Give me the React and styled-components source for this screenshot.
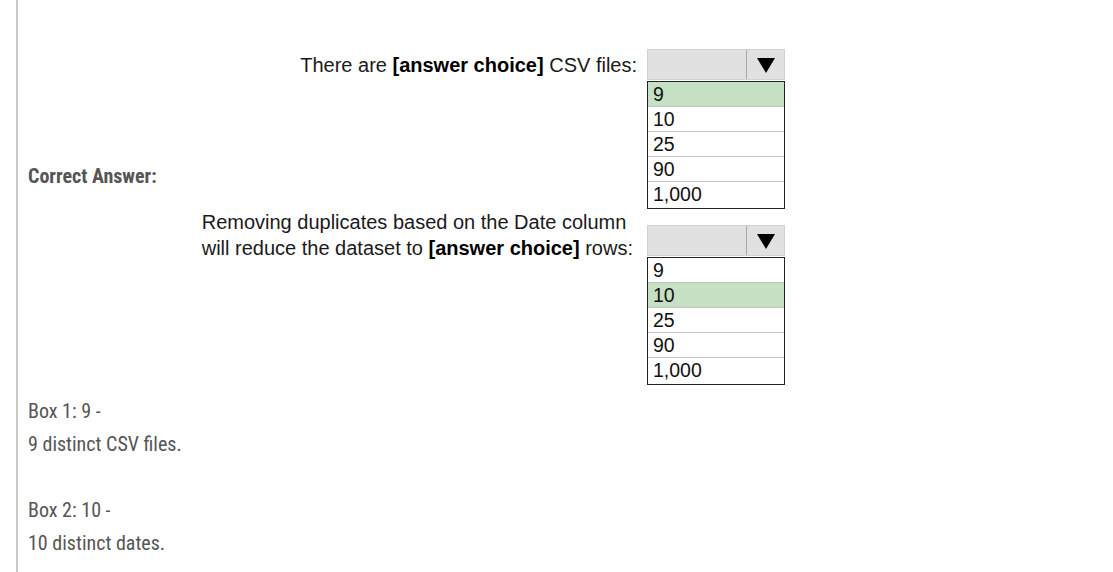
import React from "react";
import styled, { createGlobalStyle } from "styled-components";

const Global = createGlobalStyle`
  html, body { margin: 0; padding: 0; background: #fff; }
  body { font-family: "Liberation Sans", Arial, sans-serif; }
`;

const Page = styled.div`
  margin-left: 16px;
  border-left: 2px solid #c9c9c9;
  min-height: 572px;
  padding: 49px 0 0 10px;
  box-sizing: border-box;
`;

const AnswerRow = styled.div`
  display: flex;
  align-items: flex-start;
`;

const Label = styled.div`
  width: 162px;
  flex: none;
  margin-top: 111px;
  font-family: "Roboto Condensed", "Roboto", sans-serif;
  font-stretch: 85%;
  font-weight: 700;
  font-size: 20px;
  line-height: 33px;
  color: #555;
`;

const Figure = styled.div`
  display: flex;
  flex-direction: column;
`;

const Question = styled.div`
  display: grid;
  grid-template-columns: 447px 138px;
  column-gap: 10px;
  align-items: ${(p) => (p.$align === "end" ? "end" : "center")};
`;

const Prompt = styled.div`
  justify-self: end;
  grid-column: 1;
  grid-row: 1;
  font-family: "Liberation Sans", Arial, sans-serif;
  font-size: 20px;
  line-height: 26px;
  color: #1a1a1a;
  white-space: nowrap;
  margin-right: ${(p) => p.$shift || 0}px;
  margin-bottom: ${(p) => p.$drop || 0}px;
  b { font-weight: 700; color: #000; }
`;

const Select = styled.div`
  grid-column: 2;
  grid-row: 1;
  height: 31px;
  box-sizing: border-box;
  display: flex;
  background: #e1e1e1;
  border: 1px solid #d2d2d2;
`;

const SelectValue = styled.div`
  flex: 1;
  border-right: 1px solid #a8a8a8;
`;

const Arrow = styled.div`
  width: 37px;
  display: flex;
  align-items: center;
  justify-content: center;
  svg { display: block; margin-top: 1px; }
`;

const List = styled.div`
  grid-column: 2;
  grid-row: 2;
  margin-top: 1px;
  border: 1px solid #222;
  background: #fff;
`;

const Option = styled.div`
  height: ${(p) => (p.$last ? 26 : 24)}px;
  line-height: 24px;
  padding-left: 5px;
  font-family: "Liberation Sans", Arial, sans-serif;
  font-size: 19.5px;
  color: #111;
  background: ${(p) => (p.$correct ? "#c6e0c4" : "#fff")};
  border-bottom: ${(p) => (p.$last ? "none" : "1px solid #c4c4c4")};
`;

const Notes = styled.div`
  margin-top: 10px;
  font-family: "Roboto Condensed", "Roboto", sans-serif;
  font-stretch: 85%;
  font-size: 20px;
  line-height: 33px;
  color: #555;
`;

const Line = styled.div`
  min-height: 33px;
`;

const options = ["9", "10", "25", "90", "1,000"];

function Dropdown({ correct }) {
  return (
    <>
      <Select>
        <SelectValue />
        <Arrow>
          <svg width="18" height="15" viewBox="0 0 18 15">
            <polygon points="0,0 18,0 9,15" fill="#000" />
          </svg>
        </Arrow>
      </Select>
      <List>
        {options.map((o, i) => (
          <Option key={o} $correct={o === correct} $last={i === options.length - 1}>
            {o}
          </Option>
        ))}
      </List>
    </>
  );
}

export default function App() {
  return (
    <>
      <Global />
      <Page>
        <AnswerRow>
          <Label>Correct Answer:</Label>
          <Figure>
            <Question>
              <Prompt>
                There are <b>[answer choice]</b> CSV files:
              </Prompt>
              <Dropdown correct="9" />
            </Question>
            <Question $align="end">
              <Prompt $shift={4} $drop={-5}>
                Removing duplicates based on the Date column
                <br />
                will reduce the dataset to <b>[answer choice]</b> rows:
              </Prompt>
              <Dropdown correct="10" />
            </Question>
          </Figure>
        </AnswerRow>
        <Notes>
          <Line>Box 1: 9 -</Line>
          <Line>9 distinct CSV files.</Line>
          <Line />
          <Line>Box 2: 10 -</Line>
          <Line>10 distinct dates.</Line>
        </Notes>
      </Page>
    </>
  );
}
